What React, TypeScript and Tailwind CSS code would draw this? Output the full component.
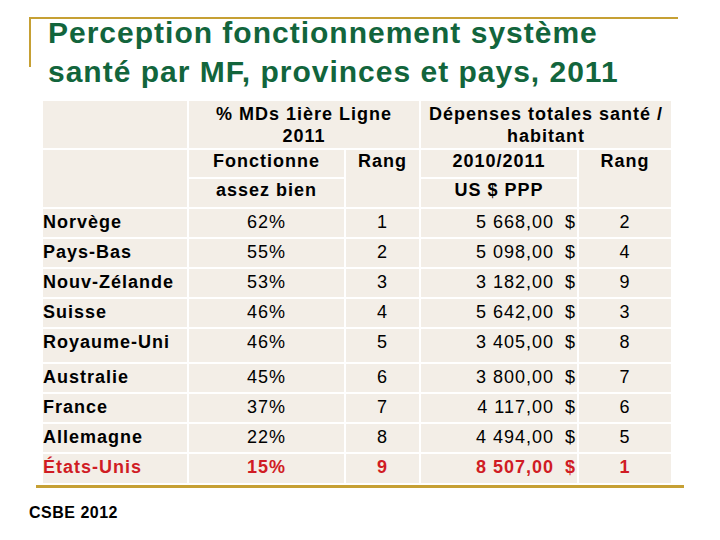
const rows = [
  { pays: "Norvège", pct: "62%", rang: "1", dep: "5 668,00", rangDep: "2", h: "h-[28px]" },
  { pays: "Pays-Bas", pct: "55%", rang: "2", dep: "5 098,00", rangDep: "4", h: "h-[28px]" },
  { pays: "Nouv-Zélande", pct: "53%", rang: "3", dep: "3 182,00", rangDep: "9", h: "h-[28px]" },
  { pays: "Suisse", pct: "46%", rang: "4", dep: "5 642,00", rangDep: "3", h: "h-[28px]" },
  { pays: "Royaume-Uni", pct: "46%", rang: "5", dep: "3 405,00", rangDep: "8", h: "h-[33px]" },
  { pays: "Australie", pct: "45%", rang: "6", dep: "3 800,00", rangDep: "7", h: "h-[28px]" },
  { pays: "France", pct: "37%", rang: "7", dep: "4 117,00", rangDep: "6", h: "h-[28px]" },
  { pays: "Allemagne", pct: "22%", rang: "8", dep: "4 494,00", rangDep: "5", h: "h-[28px]" },
  { pays: "États-Unis", pct: "15%", rang: "9", dep: "8 507,00", rangDep: "1", h: "h-[29px]", usa: true },
]

const cell = "bg-[#f3eee7]"

export default function App() {
  return (
    <div className="relative w-[720px] h-[540px] bg-white font-['Liberation_Sans',Arial,sans-serif] overflow-hidden">
      {/* gold frame corner */}
      <div className="absolute left-[29px] top-[17px] w-[649px] h-[50px] border-t-2 border-l-2 border-[#c6a034]" />

      {/* Title */}
      <div className="h-[101px] pt-[13px] pl-[48px] text-[#12653c] text-[30px] leading-[39px] font-bold tracking-[1px] whitespace-nowrap">
        <div>Perception fonctionnement système</div>
        <div>santé par MF, provinces et pays, 2011</div>
      </div>

      {/* Table */}
      <div className="ml-[43px] w-[628px] grid grid-cols-[144px_155px_73px_156px_92px] gap-[2px] text-[18px] leading-[22px] tracking-[1px] text-black">
        <div className={`${cell} h-[47px]`} />
        <div className={`${cell} col-span-2 h-[47px] pt-[2px] text-center font-bold`}>
          % MDs 1ière Ligne
          <br />
          2011
        </div>
        <div className={`${cell} col-span-2 h-[47px] pt-[2px] text-center font-bold`}>
          Dépenses totales santé /
          <br />
          habitant
        </div>

        <div className={`${cell} row-span-2`} />
        <div className={`${cell} h-[27px] text-center font-bold`}>Fonctionne</div>
        <div className={`${cell} row-span-2 text-center font-bold`}>Rang</div>
        <div className={`${cell} h-[27px] text-center font-bold`}>2010/2011</div>
        <div className={`${cell} row-span-2 text-center font-bold`}>Rang</div>
        <div className={`${cell} h-[28px] text-center font-bold`}>assez bien</div>
        <div className={`${cell} h-[28px] text-center font-bold`}>US $ PPP</div>

        {rows.map((r) => {
          const tone = r.usa ? "text-[#d01c24] font-bold" : ""
          return (
            <div key={r.pays} className="contents">
              <div className={`${cell} ${r.h} pt-[2px] font-bold ${r.usa ? "text-[#d01c24]" : ""}`}>{r.pays}</div>
              <div className={`${cell} ${r.h} pt-[2px] text-center ${tone}`}>{r.pct}</div>
              <div className={`${cell} ${r.h} pt-[2px] text-center ${tone}`}>{r.rang}</div>
              <div className={`${cell} ${r.h} pt-[2px] pr-[1px] flex justify-end items-start ${tone}`}>
                <span>{r.dep}</span>
                <span className="ml-[11px]">$</span>
              </div>
              <div className={`${cell} ${r.h} pt-[2px] text-center ${tone}`}>{r.rangDep}</div>
            </div>
          )
        })}
      </div>

      {/* bottom gold rule */}
      <div className="mt-[2px] ml-[36px] w-[648px] h-[3px] bg-[#c6a034]" />

      <div className="mt-[15px] pl-[29px] text-[16px] leading-[20px] font-bold tracking-[0.5px] text-black">
        CSBE 2012
      </div>
    </div>
  )
}
